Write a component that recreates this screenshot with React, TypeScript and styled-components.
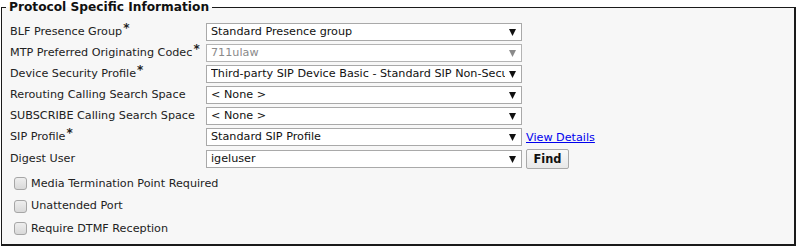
import styled, { createGlobalStyle } from "styled-components";

const GlobalStyle = createGlobalStyle`
  body {
    margin: 0;
    background: #ffffff;
    font-family: "DejaVu Sans", Verdana, sans-serif;
  }
`;

interface FieldRow {
  label: string;
  required?: boolean;
  value: string;
  disabled?: boolean;
  extra?: "link" | "button";
}

const rows: Array<FieldRow> = [
  { label: "BLF Presence Group", required: true, value: "Standard Presence group" },
  { label: "MTP Preferred Originating Codec", required: true, value: "711ulaw", disabled: true },
  {
    label: "Device Security Profile",
    required: true,
    value: "Third-party SIP Device Basic - Standard SIP Non-Secure Profile",
  },
  { label: "Rerouting Calling Search Space", value: "< None >" },
  { label: "SUBSCRIBE Calling Search Space", value: "< None >" },
  { label: "SIP Profile", required: true, value: "Standard SIP Profile", extra: "link" },
  { label: "Digest User", value: "igeluser", extra: "button" },
];

const checks = [
  "Media Termination Point Required",
  "Unattended Port",
  "Require DTMF Reception",
];

const App = () => {
  return (
    <>
      <GlobalStyle />
      <Fieldset>
        <Legend>Protocol Specific Information</Legend>
        <Grid>
          {rows.map((row) => (
            <Row key={row.label}>
              <Label>
                {row.label}
                {row.required && <Star>*</Star>}
              </Label>
              <SelectBox $disabled={row.disabled}>
                <SelectText>{row.value}</SelectText>
                <svg width="7" height="7" viewBox="0 0 7 7">
                  <polygon points="0,0 7,0 3.5,7" fill={row.disabled ? "#8a8a8a" : "#111"} />
                </svg>
              </SelectBox>
              {row.extra === "link" && <Link href="#">View Details</Link>}
              {row.extra === "button" && <Button>Find</Button>}
            </Row>
          ))}
        </Grid>
        <Checks>
          {checks.map((c) => (
            <CheckRow key={c}>
              <Box />
              <CheckLabel>{c}</CheckLabel>
            </CheckRow>
          ))}
        </Checks>
      </Fieldset>
    </>
  );
};

export default App;

const Fieldset = styled.fieldset`
  margin: 0 0 0 1px;
  width: 795px;
  height: 246px;
  box-sizing: border-box;
  border-top: 1px solid #1a1a1a;
  border-left: 1px solid #1a1a1a;
  border-right: 2px solid #1a1a1a;
  border-bottom: 2px solid #1a1a1a;
  background: #f7f7f7;
  padding: 8px 8px 0 8px;
  min-width: 0;
`;

const Legend = styled.legend`
  font-size: 12.2px;
  font-weight: bold;
  line-height: 15px;
  color: #111;
  padding: 0 3px;
  margin-left: -4px;
`;

const Grid = styled.div`
  display: flex;
  flex-direction: column;
  gap: 3px;
`;

const Row = styled.div`
  display: flex;
  align-items: center;
  height: 18px;
  &:last-child {
    height: 20px;
  }
`;

const Label = styled.div`
  width: 196px;
  flex: none;
  font-size: 11.2px;
  color: #222;
  line-height: 14px;
  margin-top: -1px;
  white-space: nowrap;
`;

const Star = styled.sup`
  font-size: 12px;
  font-weight: bold;
  line-height: 0;
  vertical-align: 0;
  position: relative;
  top: -3px;
  margin-left: 1px;
`;

const SelectBox = styled.div<{ $disabled?: boolean }>`
  width: 316px;
  height: 18px;
  box-sizing: border-box;
  border: 1px solid ${(p) => (p.$disabled ? "#b4b4b4" : "#a9a9a9")};
  background: #ffffff;
  display: flex;
  align-items: center;
  padding: 0 5px 0 4px;
  gap: 4px;
  color: ${(p) => (p.$disabled ? "#8a8a8a" : "#111")};
  svg {
    flex: none;
  }
`;

const SelectText = styled.span`
  flex: 1;
  overflow: hidden;
  white-space: nowrap;
  font-size: 11.2px;
  line-height: 16px;
`;

const Link = styled.a`
  margin-left: 4px;
  font-size: 11.2px;
  color: #0000ee;
  text-decoration: underline;
`;

const Button = styled.button`
  margin-left: 4px;
  width: 43px;
  height: 20px;
  box-sizing: border-box;
  border: 1px solid #a9a9a9;
  border-radius: 2px;
  background: linear-gradient(#f9f9f9, #e8e8e8);
  font-family: "DejaVu Sans", Verdana, sans-serif;
  font-size: 11.4px;
  font-weight: bold;
  color: #111;
  padding: 0;
`;

const Checks = styled.div`
  display: flex;
  flex-direction: column;
  padding: 8px 0 0 4px;
  gap: 9.5px;
`;

const CheckRow = styled.label`
  display: flex;
  align-items: center;
  gap: 4px;
  height: 13px;
`;

const Box = styled.span`
  width: 13px;
  height: 13px;
  box-sizing: border-box;
  border: 1px solid #a6a6a6;
  border-radius: 3px;
  background: linear-gradient(#eeeeee, #d9d9d9);
  flex: none;
`;

const CheckLabel = styled.span`
  font-size: 11.2px;
  color: #222;
  line-height: 14px;
`;
